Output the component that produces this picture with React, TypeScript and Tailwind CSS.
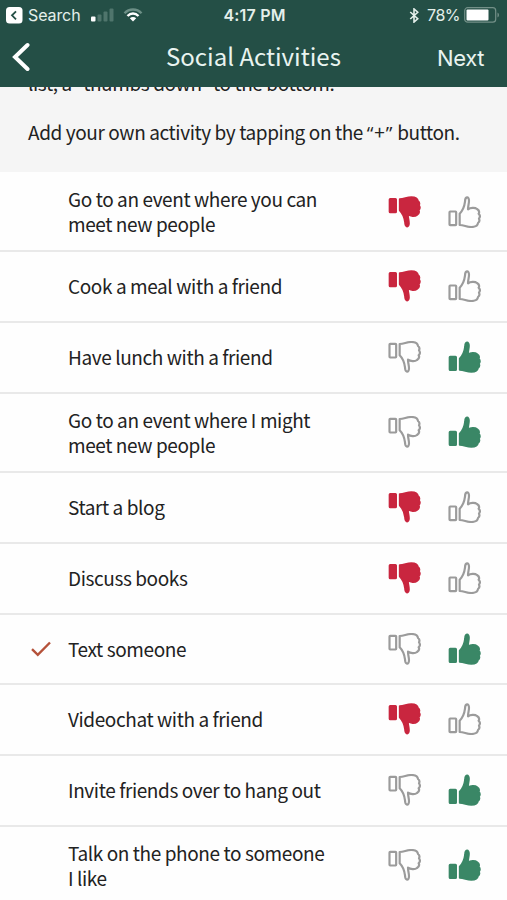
import React from 'react';

type Vote = 'up' | 'down';
type Activity = { lines: string[]; vote: Vote; height: string; checked?: boolean };

const activities: Activity[] = [
  { lines: ['Go to an event where you can', 'meet new people'], vote: 'down', height: 'h-[80px] pt-px' },
  { lines: ['Cook a meal with a friend'], vote: 'down', height: 'h-[71px] pb-px' },
  { lines: ['Have lunch with a friend'], vote: 'up', height: 'h-[71px] pb-px' },
  { lines: ['Go to an event where I might', 'meet new people'], vote: 'up', height: 'h-[79px] pb-px' },
  { lines: ['Start a blog'], vote: 'down', height: 'h-[71px] pb-px' },
  { lines: ['Discuss books'], vote: 'down', height: 'h-[71px] pb-px' },
  { lines: ['Text someone'], vote: 'up', height: 'h-[70px] pb-px', checked: true },
  { lines: ['Videochat with a friend'], vote: 'down', height: 'h-[71px] pb-px' },
  { lines: ['Invite friends over to hang out'], vote: 'up', height: 'h-[71px] pb-px' },
  { lines: ['Talk on the phone to someone', 'I like'], vote: 'up', height: 'h-[79px] pb-px' },
];

function Thumb({ kind, active }: { kind: Vote; active: boolean }) {
  const color = !active ? 'text-[#9b9b9b]' : kind === 'up' ? 'text-[#3a8766]' : 'text-[#c9263f]';
  return (
    <svg
      viewBox="0 0 99 96"
      className={`h-8 w-[33px] shrink-0 ${color} ${kind === 'down' ? '-scale-y-100' : ''}`}
      fill={active ? 'currentColor' : 'none'}
      stroke="currentColor"
      strokeWidth={active ? 5 : 6.5}
      strokeLinejoin="round"
    >
      <rect x="4.500" y="46.500" width="20" height="41" rx="2" />
      <path d="M35 53C43 45 49 33 51 17C51 1 63 0 63 14C63 23 60 30 60 40C67 35 81 34 87 39C93 43 95 48 92 53C97 58 96 64 93 68C96 74 94 78 90 81C89 90 81 93 70 93C56 93 48 87 35 87Z" />
    </svg>
  );
}

function Quote({ children }: { children: string }) {
  return <span className="font-['Open_Sans',sans-serif] tracking-[0.9px]">{children}</span>;
}

function StatusBar() {
  return (
    <div className="flex h-[30px] items-center font-['Inter',sans-serif] text-[#e4efeb]">
      <div className="flex flex-1 items-center pl-1.5">
        <svg viewBox="0 0 17 17" className="size-[17px]">
          <rect width="16.500" height="16.500" rx="3.500" fill="#fff" />
          <path d="M10 4.300L6 8.300L10 12.300" fill="none" stroke="#244f46" strokeWidth="1.800" />
        </svg>
        <span className="ml-[5px] w-[52px] whitespace-nowrap text-[16px] leading-none tracking-[-0.1px]">Search</span>
        <svg viewBox="0 0 24 14" className="ml-[11px] h-[14px] w-6">
          <rect x="0" y="8.500" width="4.500" height="5" rx="1" fill="#fff" />
          <rect x="6.500" y="6.500" width="4" height="7" rx="1" fill="#4f756c" />
          <rect x="12.500" y="3.500" width="4" height="10" rx="1" fill="#4f756c" />
          <rect x="18.500" y="0.500" width="4" height="13" rx="1" fill="#4f756c" />
        </svg>
        <svg viewBox="0 0 20 14" className="ml-2 h-[14px] w-5" fill="none" strokeWidth="2.400">
          <path d="M1.500 5.200C6.200 .2 13.800 .2 18.500 5.200" stroke="#6c8f86" />
          <path d="M4.500 8C7.700 4.600 12.300 4.600 15.500 8" stroke="#fff" />
          <path d="M10 13.500L6.800 10.200C8.600 8.500 11.400 8.500 13.200 10.200Z" fill="#fff" />
        </svg>
      </div>
      <span className="pl-[3px] text-[16px] font-semibold leading-none tracking-[0.2px]">4:17 PM</span>
      <div className="flex flex-1 items-center justify-end pr-[7px]">
        <svg viewBox="0 0 10 16" className="h-[15px] w-[10px]" fill="none" stroke="currentColor" strokeWidth="1.700">
          <path d="M1 4.300L9 11.500L5 15V1L9 4.500L1 11.700" />
        </svg>
        <span className="ml-[8px] mr-[4px] text-[16px] leading-none tracking-[-0.5px]">78%</span>
        <svg viewBox="0 0 36 16" className="h-4 w-9">
          <rect x="0.700" y="0.700" width="31" height="14.500" rx="3" fill="none" stroke="#739088" strokeWidth="1.200" />
          <rect x="2.500" y="2.500" width="22" height="11" rx="1" fill="#fff" />
          <path d="M33.500 5.500C35.500 6.500 35.500 9.500 33.500 10.500Z" fill="#739088" />
        </svg>
      </div>
    </div>
  );
}

export default function App() {
  return (
    <div className="flex h-[900px] w-[507px] flex-col overflow-hidden bg-[#fefefe] font-['Noto_Sans_CJK_SC',sans-serif] text-[#222222]">
      <header className="h-[87px] shrink-0 bg-[#244f46]">
        <StatusBar />
        <div className="flex h-[53px] items-center text-[#e9f4f0]">
          <div className="w-[166px] pl-3 pt-px">
            <svg viewBox="0 0 18 30" className="h-[30px] w-[18px]" fill="none" stroke="#fff" strokeWidth="4" strokeLinecap="round">
              <path d="M15.500 3L3 15L15.500 27" />
            </svg>
          </div>
          <h1 className="pb-[2px] text-[24px] leading-none">Social Activities</h1>
          <div className="flex-1 pr-[23px] pt-0.5 text-right font-['Inter',sans-serif] text-[22px] leading-none tracking-[-0.4px]">Next</div>
        </div>
      </header>
      <section className="h-[85px] shrink-0 overflow-hidden bg-[#f5f5f5] pl-7 text-[19px] tracking-[-0.4px]">
        <p className="-mt-[17px] h-[26px] whitespace-nowrap leading-[26px]">
          list, a <Quote>“</Quote>thumbs down<Quote>”</Quote> to the bottom.
        </p>
        <p className="mt-[23px] whitespace-nowrap leading-[26px]">
          Add your own activity by tapping on the <Quote>“</Quote>
          <span className="tracking-[0.9px]">+</span>
          <Quote>”</Quote> button.
        </p>
      </section>
      <ul>
        {activities.map((a) => (
          <li key={a.lines[0]} className={`flex items-center border-b-2 border-[#e9e9e9] last:border-transparent ${a.height}`}>
            <div className="flex w-[68px] shrink-0 pl-[31px]">
              {a.checked && (
                <svg viewBox="0 0 20 16" className="h-4 w-5" fill="none" stroke="#b5523a" strokeWidth="2.400">
                  <path d="M1 8.200L6.800 13.800L19 1.500" />
                </svg>
              )}
            </div>
            <div className="flex-1 whitespace-nowrap pb-px text-[19px] leading-[25px] tracking-[-0.4px]">
              {a.lines.map((line) => (
                <div key={line}>{line}</div>
              ))}
            </div>
            <div className="flex gap-[27px] pr-[26.5px]">
              <Thumb kind="down" active={a.vote === 'down'} />
              <Thumb kind="up" active={a.vote === 'up'} />
            </div>
          </li>
        ))}
      </ul>
    </div>
  );
}
